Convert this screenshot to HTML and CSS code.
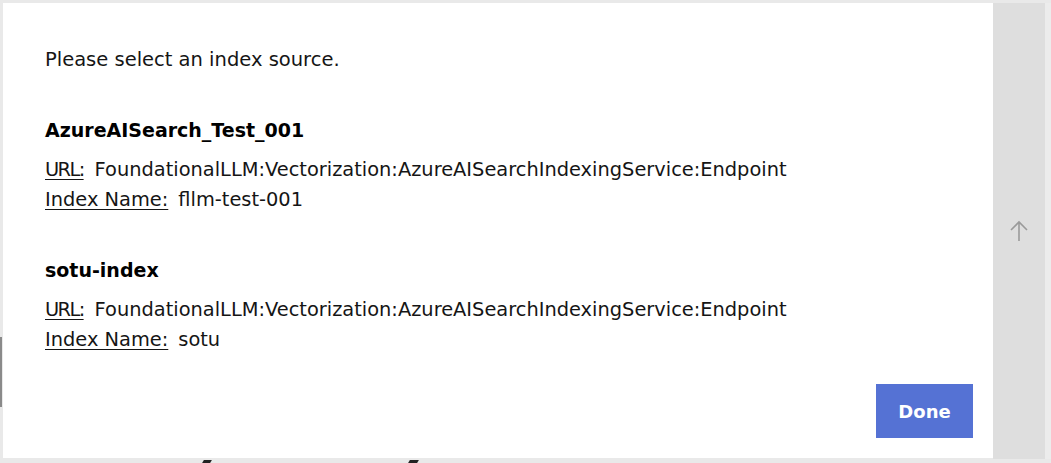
FILE: index.html
```html
<!DOCTYPE html>
<html>
<head>
<meta charset="utf-8">
<link rel="stylesheet" href="styles.css">
</head>
<body>
<div class="frame">
  <div class="dialog">
    <p class="intro">Please select an index source.</p>
    <div class="source first">
      <h3 class="source-name">AzureAISearch_Test_001</h3>
      <div class="field"><span class="label label-url">URL:</span><span class="value">FoundationalLLM:Vectorization:AzureAISearchIndexingService:Endpoint</span></div>
      <div class="field"><span class="label">Index Name:</span><span class="value">fllm-test-001</span></div>
    </div>
    <div class="source">
      <h3 class="source-name">sotu-index</h3>
      <div class="field"><span class="label label-url">URL:</span><span class="value">FoundationalLLM:Vectorization:AzureAISearchIndexingService:Endpoint</span></div>
      <div class="field"><span class="label">Index Name:</span><span class="value">sotu</span></div>
    </div>
    <div class="actions"><button class="done">Done</button></div>
  </div>
  <div class="strip">
    <svg class="arrow" width="20" height="22" viewBox="0 0 20 22"><path d="M10 21V2M2 10l8-8 8 8" fill="none" stroke="#9a9a9a" stroke-width="1.6"/></svg>
  </div>
  <div class="edge"></div>
</div>
<div class="side-mark"></div>
<div class="peek peek-a"></div>
<div class="peek peek-b"></div>
</body>
</html>
```
FILE: styles.css
```css
html, body {
  margin: 0;
  padding: 0;
}
body {
  width: 1051px;
  height: 463px;
  overflow: hidden;
  background: #e9e9e9;
  font-family: "DejaVu Sans", sans-serif;
  color: #151515;
  position: relative;
}
.frame {
  display: flex;
  padding-top: 3px;
  padding-left: 3px;
}
.dialog {
  width: 990px;
  height: 455px;
  box-sizing: border-box;
  background: #fff;
  padding: 45px 20px 20px 42px;
  display: flex;
  flex-direction: column;
}
.intro {
  margin: 0;
  font-size: 19.5px;
  line-height: 24px;
}
.source {
  margin-top: 43px;
}
.source.first {
  margin-top: 46px;
}
.source-name {
  margin: 0 0 13px;
  font-size: 19px;
  line-height: 24px;
  font-weight: bold;
  color: #000;
}
.field {
  font-size: 19.4px;
  line-height: 30px;
}
.label {
  text-decoration: underline;
  text-decoration-thickness: 1px;
  text-underline-offset: 3px;
  margin-right: 10px;
}
.label-url {
  letter-spacing: -1.6px;
  margin-right: 11px;
}
.actions {
  margin-top: auto;
  display: flex;
  justify-content: flex-end;
}
.done {
  width: 97px;
  height: 54px;
  border: none;
  background: #5572d4;
  color: #fff;
  font-family: "DejaVu Sans", sans-serif;
  font-weight: bold;
  font-size: 18px;
  padding: 0;
}
.strip {
  width: 52px;
  height: 456px;
  background: #dedede;
  display: flex;
  justify-content: center;
  align-items: center;
}
.arrow {
  display: block;
}
.edge {
  flex: 1;
  height: 456px;
  background: #ececec;
}
.side-mark {
  position: absolute;
  left: 0;
  top: 337px;
  width: 2px;
  height: 70px;
  background: #8a8a8a;
}
.peek {
  position: absolute;
  top: 460px;
  height: 3px;
  background: #222;
  transform: skewX(-30deg);
}
.peek-a { left: 203px; width: 8px; }
.peek-b { left: 409px; width: 9px; }
```
